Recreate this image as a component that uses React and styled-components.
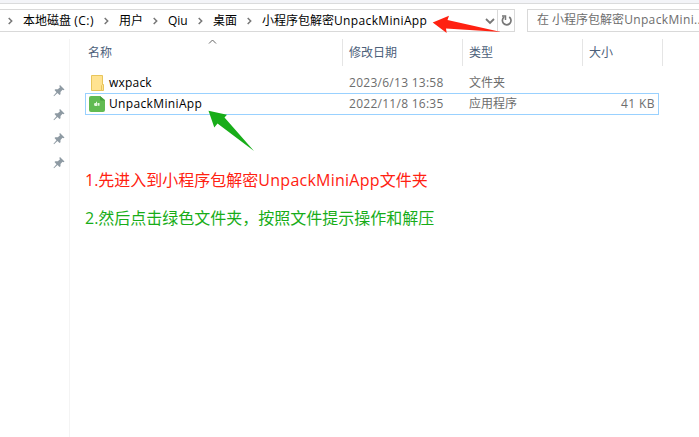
import React from "react";
import styled, { createGlobalStyle } from "styled-components";

const GlobalStyle = createGlobalStyle`
  * { box-sizing: border-box; }
  body { margin: 0; background: #fff; overflow: hidden; }
`;

const Explorer = styled.div`
  position: relative;
  display: flex;
  flex-direction: column;
  width: 699px;
  height: 437px;
  overflow: hidden;
  background: #fff;
  color: #000;
  font: 12px/20px "Open Sans", "Noto Sans CJK SC", sans-serif;
  white-space: nowrap;
`;

const Ribbon = styled.div`
  height: 4px;
  flex: none;
  background: #f3f4f8;
  border-bottom: 1px solid #dadbdc;
`;

const Toolbar = styled.div`
  display: flex;
  flex: none;
  height: 23px;
  margin-top: 5px;
`;

const AddressBar = styled.div`
  display: flex;
  width: 515px;
  border: 1px solid #d9d9d9;
  border-left: 0;
`;

const Crumbs = styled.div`
  display: flex;
  align-items: center;
  width: 480px;
`;

const Crumb = styled.span`
  flex: none;
  width: ${(p) => p.$width}px;
`;

const Latin = styled.span`
  letter-spacing: ${(p) => p.$spacing}px;
`;

const Separator = styled.svg`
  flex: none;
  width: 23px;
  height: 12px;
  margin-left: ${(p) => p.$offset || 0}px;
`;

const DropDown = styled.svg`
  width: 17px;
  height: 21px;
`;

const Refresh = styled.div`
  width: 17px;
  height: 21px;
  border-left: 1px solid #d9d9d9;
`;

const Search = styled.div`
  flex: 1;
  min-width: 0;
  overflow: hidden;
  margin-left: 12px;
  padding-left: 9px;
  border: 1px solid #d9d9d9;
  border-right: 0;
  color: #6d6d6d;
`;

const Content = styled.div`
  display: flex;
  flex: 1;
`;

const Sidebar = styled.aside`
  display: flex;
  flex-direction: column;
  gap: 12px;
  width: 70px;
  margin-top: 7px;
  padding: 46px 0 0 53px;
  border-right: 1px solid #f4f4f4;
`;

const PinIcon = styled.svg`
  width: 12px;
  height: 12px;
`;

const Files = styled.main`
  flex: 1;
  padding: 7px 0 0 15px;
`;

const HeaderRow = styled.div`
  display: grid;
  grid-template-columns: 258px 120px 120px 80px;
  height: 27px;
`;

const HeaderCell = styled.div`
  position: relative;
  padding: 4px 0 0 ${(p) => (p.$first ? 3 : 6)}px;
  border-right: 1px solid #e5e5e5;
  color: #4c607a;
`;

const SortIcon = styled.svg`
  position: absolute;
  left: 123px;
  top: 0;
  width: 9px;
  height: 6px;
`;

const FileList = styled.div`
  padding-top: 7px;
`;

const FileRow = styled.div`
  display: grid;
  grid-template-columns: 23px 240px 120px 120px 1fr;
  align-items: center;
  width: 574px;
  height: ${(p) => (p.$selected ? 22 : 20)}px;
  border: ${(p) => (p.$selected ? "1px solid #99d1ff" : "0 solid transparent")};
  padding-left: ${(p) => (p.$selected ? 0 : 1)}px;
`;

const FileIcon = styled.svg`
  width: 18px;
  height: 18px;
  margin-left: 2px;
`;

const Meta = styled.span`
  color: #6d6d6d;
`;

const Size = styled(Meta)`
  padding-right: 3px;
  text-align: right;
`;

const Notes = styled.div`
  display: flex;
  flex-direction: column;
  gap: 14px;
  padding-top: 53px;
  font-size: 16px;
  line-height: 24px;
`;

const Note = styled.div`
  color: ${(p) => p.$color};
`;

const Annotations = styled.svg`
  position: absolute;
  inset: 0;
  width: 699px;
  height: 437px;
  pointer-events: none;
`;

const Chevron = ({ offset }) => (
  <Separator $offset={offset} viewBox="0 0 23 12">
    <path d="M8.7 3 L11.7 6 L8.7 9" fill="none" stroke="#777" strokeWidth="1.5" />
  </Separator>
);

const Pin = () => (
  <PinIcon viewBox="0 0 12 12">
    <path d="M7 0 L11.5 4.5 L10.5 5.2 L9.5 4.8 L7.5 7 L7.5 9.3 L6.5 10 L4.5 8 L1 11.3 L.5 10.8 L3.5 7.2 L1.5 5 L2.3 4.2 L4.8 4.2 L7 2.3 L6.3 .9Z" fill="#8e9aa3" />
  </PinIcon>
);

const FolderIcon = () => (
  <FileIcon viewBox="0 0 18 18">
    <path d="M3.5 1.5 H14.5 V16.5 H3.5Z" fill="#ffe391" stroke="#e8c55b" />
    <path d="M13.5 16.5 V11.5 L14.5 10.5 H15.5 V16.5Z" fill="#ffe391" stroke="#e8c55b" />
  </FileIcon>
);

const AppIcon = () => (
  <FileIcon viewBox="0 0 18 18">
    <path d="M3 1 H12 L17 5 V15 Q17 17 15 17 H3 Q1 17 1 15 V3 Q1 1 3 1Z" fill="#61bb52" />
    <path d="M12 1 L17 5.5 H13 Q12 5.5 12 4Z" fill="#459f3c" />
    <path d="M6 9 Q6 7.8 8 8 V6.7 H9 V11 H7 Q6 11 6 9Z M9.5 8 H11.5 V10.8 H9.5Z" fill="#e5f8df" />
  </FileIcon>
);

const rows = [
  { name: "wxpack", spacing: 0.2, date: "2023/6/13 13:58", type: "文件夹", size: "", Icon: FolderIcon },
  { name: "UnpackMiniApp", spacing: 0.35, date: "2022/11/8 16:35", type: "应用程序", size: "41 KB", Icon: AppIcon, selected: true },
];

export default function App() {
  return (
    <Explorer>
      <GlobalStyle />
      <Ribbon />
      <Toolbar>
        <AddressBar>
          <Crumbs>
            <Chevron />
            <Crumb $width={72}>
              本地磁盘 <Latin $spacing={0.5}>(C:)</Latin>
            </Crumb>
            <Chevron offset={1} />
            <Crumb $width={24}>用户</Crumb>
            <Chevron offset={2} />
            <Crumb $width={22}>Qiu</Crumb>
            <Chevron />
            <Crumb $width={24}>桌面</Crumb>
            <Chevron offset={2} />
            <Crumb $width={168}>
              小程序包解密<Latin $spacing={0.35}>UnpackMiniApp</Latin>
            </Crumb>
          </Crumbs>
          <DropDown viewBox="0 0 17 21">
            <path d="M6 9 L10 13 L14 9" fill="none" stroke="#777" strokeWidth="1.8" />
          </DropDown>
          <Refresh>
            <svg width="16" height="21" viewBox="0 0 16 21">
              <path d="M11.2 7 A4.3 4.3 0 1 1 6.2 7" fill="none" stroke="#777" strokeWidth="1.7" />
              <path d="M4 6 H7.5 V10" fill="none" stroke="#777" strokeWidth="1.5" />
            </svg>
          </Refresh>
        </AddressBar>
        <Search>
          在 小程序包解密<Latin $spacing={0.35}>UnpackMini...</Latin>
        </Search>
      </Toolbar>
      <Content>
        <Sidebar>
          <Pin />
          <Pin />
          <Pin />
          <Pin />
        </Sidebar>
        <Files>
          <HeaderRow>
            <HeaderCell $first>
              名称
              <SortIcon viewBox="0 0 9 6">
                <path d="M1 4.5 L4.5 1 L8 4.5" fill="none" stroke="#666" />
              </SortIcon>
            </HeaderCell>
            <HeaderCell>修改日期</HeaderCell>
            <HeaderCell>类型</HeaderCell>
            <HeaderCell>大小</HeaderCell>
          </HeaderRow>
          <FileList>
            {rows.map(({ name, spacing, date, type, size, Icon, selected }) => (
              <FileRow key={name} $selected={selected}>
                <Icon />
                <Latin $spacing={spacing}>{name}</Latin>
                <Meta>
                  <Latin $spacing={0.27}>{date}</Latin>
                </Meta>
                <Meta>{type}</Meta>
                <Size>
                  <Latin $spacing={0.4}>{size}</Latin>
                </Size>
              </FileRow>
            ))}
          </FileList>
          <Notes>
            <Note $color="#ff2111">
              1.先进入到小程序包解密<Latin $spacing={0.25}>UnpackMiniApp</Latin>文件夹
            </Note>
            <Note $color="#18ad19">2.然后点击绿色文件夹，按照文件提示操作和解压</Note>
          </Notes>
        </Files>
      </Content>
      <Annotations viewBox="0 0 699 437">
        <path d="M432.7 22.5 L449 15.7 L447.5 20 L501 32 L446 28.5 L446.7 33Z" fill="#ff2111" />
        <path d="M208.5 110.7 L227 114.7 L224.5 117.5 L254 151 L217.5 123.5 L214.3 127.5Z" fill="#18ad19" />
      </Annotations>
    </Explorer>
  );
}
